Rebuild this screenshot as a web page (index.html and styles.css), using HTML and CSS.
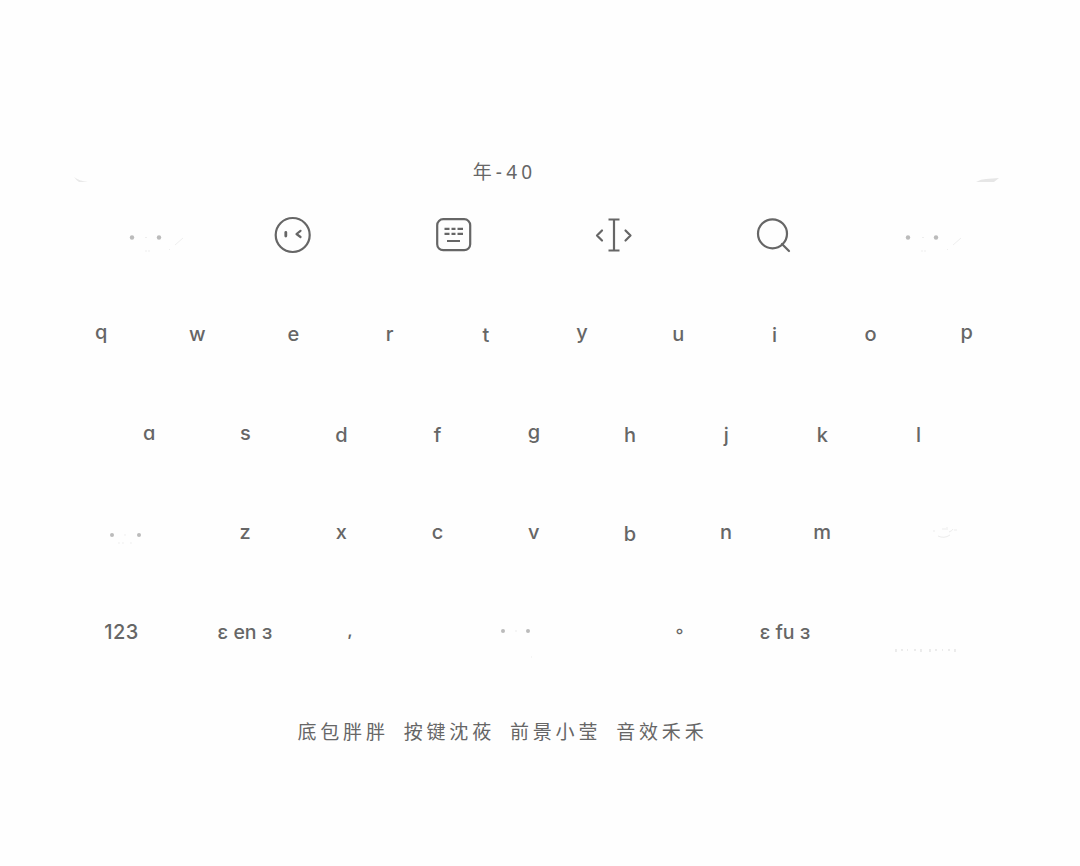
FILE: index.html
```html
<!DOCTYPE html>
<html lang="zh">
<head>
<meta charset="utf-8">
<title>Keyboard</title>
<link rel="stylesheet" href="styles.css">
</head>
<body>
<main class="board">
  <div class="corners">
    <svg class="corner" width="20" height="8" viewBox="0 0 20 8"><path d="M1 1Q6 5 15 6L6 6Q3 4 1 1Z" fill="#e9e9e9"/></svg>
    <svg class="corner" width="28" height="8" viewBox="0 0 28 8"><path d="M3 6Q8 3 13 3L26 2L21 6Z" fill="#e6e6e6"/></svg>
  </div>
  <div class="hint">年-40</div>
  <div class="tools">
    <div class="tool">
      <svg class="faint" width="100" height="50" viewBox="0 0 100 50"><circle cx="49" cy="27.500" r="2.200" fill="#bbb"/><circle cx="76" cy="27.500" r="2.200" fill="#bbb"/><path d="M62 27.500h2M63 40v2M66 40v2M92 35l8-7M86 40l1-1" stroke="#eeeeee" fill="none"/></svg>
    </div>
    <div class="tool">
      <svg width="40" height="40" viewBox="0 0 40 40"><circle cx="19.700" cy="20" r="17" class="stroke"/><path d="M12.800 17.500v3.600" class="stroke thick"/><path d="M27.500 15.800l-4 3.200 4 3" class="stroke"/></svg>
    </div>
    <div class="tool">
      <svg width="40" height="40" viewBox="0 0 40 40"><rect x="3.200" y="4.200" width="33" height="31" rx="6" class="stroke"/><path d="M10.500 13.800h5M17.500 13.800h4M23.500 13.800h5.500M10.500 18.800h5M17.500 18.800h4M23.500 18.800h5.500M13 26h13" class="stroke butt"/></svg>
    </div>
    <div class="tool">
      <svg width="40" height="40" viewBox="0 0 40 40"><path d="M14.500 4.500h11M14.500 35.500h11M20 4.500v31" class="stroke butt"/><path d="M8 15.500l-5 5 5 5M31.500 15.500l5 5-5 5" class="stroke"/></svg>
    </div>
    <div class="tool">
      <svg width="40" height="40" viewBox="0 0 40 40"><circle cx="18.500" cy="18.800" r="14.500" class="stroke"/><path d="M28 29l7 7" class="stroke"/></svg>
    </div>
    <div class="tool">
      <svg class="faint" width="100" height="50" viewBox="0 0 100 50"><circle cx="23" cy="27.500" r="2.200" fill="#bbb"/><circle cx="51" cy="27.500" r="2.200" fill="#bbb"/><path d="M37 27.500h2M37 40v2M40 40v2M68 35l8-7M62 40l1-1" stroke="#eeeeee" fill="none"/></svg>
    </div>
  </div>
  <div class="row">
    <div class="key up">q</div><div class="key">w</div><div class="key">e</div><div class="key">r</div><div class="key dn">t</div><div class="key up">y</div><div class="key">u</div><div class="key dn">i</div><div class="key">o</div><div class="key up">p</div>
  </div>
  <div class="row inset">
    <div class="key">a</div><div class="key">s</div><div class="key dn">d</div><div class="key dn">f</div><div class="key up">g</div><div class="key dn">h</div><div class="key dn">j</div><div class="key dn">k</div><div class="key dn">l</div>
  </div>
  <div class="row">
    <div class="key shift"><svg width="60" height="40" viewBox="0 0 60 40"><circle cx="17" cy="22" r="2" fill="#bbb"/><circle cx="44" cy="22" r="2" fill="#bbb"/><path d="M29 22h2M24 29v2M28 29v2M36 29v2" stroke="#efefef" fill="none"/></svg></div>
    <div class="key lift">z</div><div class="key lift">x</div><div class="key lift">c</div><div class="key lift">v</div><div class="key dn">b</div><div class="key lift">n</div><div class="key lift">m</div>
    <div class="key del"><svg width="40" height="30" viewBox="0 0 40 30"><path d="M10 13h2M31 12h3M19 11h4M24 9v3M15 18q6 3 12-1M26 14q3-1 4-3" stroke="#ececec" fill="none"/></svg></div>
  </div>
  <div class="row">
    <div class="key num">123</div>
    <div class="key lang"><span class="small">ɛ en ɜ</span></div>
    <div class="key punct"><span class="comma">,</span></div>
    <div class="key space"><svg width="60" height="60" viewBox="0 0 60 60"><circle cx="18" cy="29" r="2" fill="#bbb"/><circle cx="43" cy="29" r="2" fill="#bbb"/><path d="M30 29h2M46 55h1" stroke="#ececec" fill="none"/></svg></div>
    <div class="key punct"><span class="stop">。</span></div>
    <div class="key lang"><span class="small">ɛ fu ɜ</span></div>
    <div class="key enter"><svg width="70" height="40" viewBox="0 0 70 40"><path d="M5 37v3M10 38h2M16 38h1M23 38h2M30 37v3M39 37v3M44 38h2M51 38h1M57 38h2M64 37v3" stroke="#d9d9d9" fill="none"/></svg></div>
  </div>
  <div class="foot">底包胖胖 按键沈莜 前景小莹 音效禾禾</div>
</main>
</body>
</html>
```
FILE: styles.css
```css
* { box-sizing: border-box; }
html, body { margin: 0; height: 100%; }
body {
  background: #fefefe;
  color: #666;
  font-family: Inter, "Noto Sans CJK SC", sans-serif;
  font-feature-settings: "cv11";
}
.board { position: relative; width: 962px; margin-left: 53px; padding-top: 150px; }
.corners {
  position: absolute;
  top: 176px;
  left: 20px;
  width: 928px;
  display: flex;
  justify-content: space-between;
}
.hint {
  height: 44px;
  display: flex;
  align-items: center;
  justify-content: center;
  padding-right: 59px;
  padding-bottom: 2px;
  font-size: 19px;
  font-weight: 400;
  letter-spacing: 4.200px;
  font-family: "Noto Sans", "Noto Sans CJK SC", sans-serif;
}
.tools { height: 90px; padding-bottom: 9px; display: grid; grid-template-columns: repeat(6, 1fr); }
.tool { display: flex; align-items: center; justify-content: center; }
.tool svg { display: block; flex: none; }
.stroke { fill: none; stroke: #666; stroke-width: 2.200; stroke-linecap: round; stroke-linejoin: round; }
.butt { stroke-linecap: butt; }
.thick { stroke-width: 2.800; }
.row { height: 99.500px; display: flex; }
.inset { padding-left: 48px; }
.key {
  width: 96.200px;
  flex: none;
  display: flex;
  align-items: center;
  justify-content: center;
  font-size: 20px;
  font-weight: 450;
  line-height: 24px;
}
.key svg { display: block; flex: none; }
.up { padding-bottom: 3px; }
.dn { padding-top: 3px; }
.lift { padding-bottom: 2px; }
.shift { width: 144px; }
.del { width: 145px; }
.num { width: 137px; font-size: 20px; letter-spacing: .5px; }
.lang { width: 110px; }
.punct { width: 100px; }
.space { width: 230px; }
.enter { width: 172px; }
.small { font-size: 19.500px; white-space: pre; }
.comma { font-size: 15px; font-weight: 700; padding-bottom: 3px; }
.stop { font-size: 18px; font-weight: 700; padding-left: 10px; padding-bottom: 10px; }
.foot {
  height: 98px;
  display: flex;
  align-items: center;
  justify-content: center;
  padding-right: 63px;
  padding-bottom: 2px;
  font-size: 19px;
  font-weight: 400;
  letter-spacing: 3.800px;
  word-spacing: 7px;
  font-family: "Noto Sans CJK SC", sans-serif;
}
```
